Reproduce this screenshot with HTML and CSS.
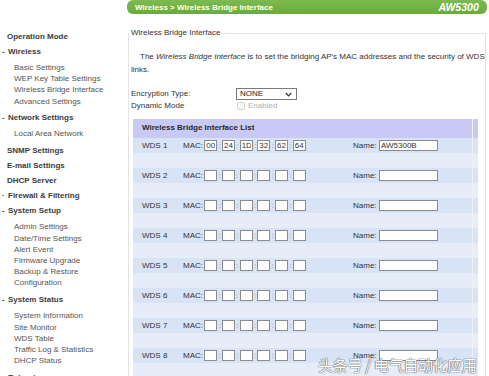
FILE: index.html
```html
<!DOCTYPE html>
<html lang="en">
<head>
    <meta charset="UTF-8">
    <title>Wireless Bridge Interface</title>
    <link rel="stylesheet" href="styles.css">
</head>
<body>
<div class="page">
    <div class="nav">
        <div class="nav-head plain">Operation Mode</div>
        <div class="nav-head"><span class="sign">-</span>Wireless</div>
        <div class="nav-group">
            <div class="nav-item">Basic Settings</div>
            <div class="nav-item">WEP Key Table Settings</div>
            <div class="nav-item">Wireless Bridge Interface</div>
            <div class="nav-item">Advanced Settings</div>
        </div>
        <div class="nav-head"><span class="sign">-</span>Network Settings</div>
        <div class="nav-group">
            <div class="nav-item">Local Area Network</div>
        </div>
        <div class="nav-head plain">SNMP Settings</div>
        <div class="nav-head plain">E-mail Settings</div>
        <div class="nav-head plain">DHCP Server</div>
        <div class="nav-head"><span class="sign">&middot;</span>Firewall &amp; Filtering</div>
        <div class="nav-head"><span class="sign">-</span>System Setup</div>
        <div class="nav-group">
            <div class="nav-item">Admin Settings</div>
            <div class="nav-item">Date/Time Settings</div>
            <div class="nav-item">Alert Event</div>
            <div class="nav-item">Firmware Upgrade</div>
            <div class="nav-item">Backup &amp; Restore</div>
            <div class="nav-item">Configuration</div>
        </div>
        <div class="nav-head"><span class="sign">-</span>System Status</div>
        <div class="nav-group">
            <div class="nav-item">System Information</div>
            <div class="nav-item">Site Monitor</div>
            <div class="nav-item">WDS Table</div>
            <div class="nav-item">Traffic Log &amp; Statistics</div>
            <div class="nav-item">DHCP Status</div>
        </div>
        <div class="nav-head"><span class="sign">-</span>Reboot</div>
    </div>

    <div class="main">
        <div class="crumb">
            <span class="crumb-title">Wireless &gt; Wireless Bridge Interface</span>
            <span class="model">AW5300</span>
        </div>

        <fieldset class="panel">
            <legend>Wireless Bridge Interface</legend>
            <p class="intro"><span class="indent">The <i>Wireless Bridge Interface</i> is to set the bridging AP's MAC addresses and the security of WDS</span><br>links.</p>

            <div class="opts">
                <span>Encryption Type:</span>
                <span class="select-wrap">
                    <select class="enc"><option>NONE</option></select>
                    <svg class="chev" width="7" height="5" viewBox="0 0 7 5"><polyline points="0.8,1 3.5,3.8 6.2,1" fill="none" stroke="#333" stroke-width="1.2"/></svg>
                </span>
                <span>Dynamic Mode</span>
                <label class="check"><input type="checkbox" disabled> Enabled</label>
            </div>

            <table class="wds-table">
                <colgroup>
                    <col class="c1"><col class="c2"><col class="c3"><col class="c4">
                </colgroup>
                <tr class="head-row"><th colspan="3">Wireless Bridge Interface List</th><th class="edge"></th></tr>
                <tbody id="wds_rows"></tbody>
            </table>
        </fieldset>
    </div>
</div>

<div class="watermark">头条号 / 电气自动化应用</div>

<script>
    // build the 8 WDS rows, only WDS 1 has values
    const rows = document.getElementById("wds_rows");
    const first = ["00", "24", "1D", "32", "62", "64"];

    for (let i = 1; i <= 8; i++) {
        let boxes = "";
        for (let j = 0; j < 6; j++) {
            const val = i === 1 ? first[j] : "";
            boxes += `<input class="mac-box" type="text" value="${val}">`;
            if (j < 5) boxes += `<span class="sep">:</span>`;
        }
        const name = i === 1 ? "AW5300B" : "";

        const main = document.createElement("tr");
        main.className = "row-main";
        main.innerHTML = `
            <td class="wds">WDS ${i}</td>
            <td><div class="mac"><span class="lbl">MAC:</span>${boxes}</div></td>
            <td><div class="name"><span>Name:</span><input class="name-box" type="text" value="${name}"></div></td>
            <td class="edge"></td>
        `;
        const gap = document.createElement("tr");
        gap.className = "row-gap";
        gap.innerHTML = `<td></td><td></td><td></td><td class="edge"></td>`;

        rows.appendChild(main);
        rows.appendChild(gap);
    }
</script>
</body>
</html>
```

FILE: styles.css
```css
body {
    margin: 0;
    font-family: "Liberation Sans", Arial, sans-serif;
    font-size: 8px;
    color: #333;
    background: #fff;
    overflow: hidden;
}

.page {
    display: flex;
    height: 376px;
}

/* left menu */
.nav {
    width: 127px;
    flex-shrink: 0;
    padding-top: 28.5px;
    box-sizing: border-box;
}

.nav-head {
    font-weight: bold;
    line-height: 15px;
    padding-left: 2px;
    color: #3c3c3c;
    white-space: nowrap;
}

.nav-head.plain {
    padding-left: 7px;
}

.nav-head .sign {
    display: inline-block;
    width: 6px;
}

.nav-group {
    padding: 3.4px 0;
}

.nav-item {
    line-height: 11.2px;
    padding-left: 14px;
    color: #555;
    white-space: nowrap;
}

/* right content */
.main {
    flex: 1;
    padding-right: 4px;
}

.crumb {
    height: 14px;
    background: linear-gradient(#7dbb50, #6aaa3c);
    border-radius: 6px;
    display: flex;
    align-items: center;
    justify-content: space-between;
    padding: 0 8px 0 8px;
    color: #fff;
}

.crumb-title {
    font-weight: bold;
}

.model {
    font-weight: bold;
    font-style: italic;
    font-size: 10.5px;
}

.panel {
    margin: 14px 1px 0 1px;
    padding: 0;
    border: 1px solid #e4e4e4;
    min-width: 0;
}

.panel legend {
    padding: 0 2px;
    line-height: 10px;
}

.intro {
    margin: 12px 0 0 2px;
    line-height: 13px;
    white-space: nowrap;
}

.intro .indent {
    padding-left: 9px;
}

.opts {
    display: grid;
    grid-template-columns: 105px auto;
    grid-auto-rows: 12px;
    align-items: center;
    margin: 11.5px 0 0 2px;
}

.select-wrap {
    position: relative;
    width: 61px;
    height: 12px;
}

.enc {
    appearance: none;
    -webkit-appearance: none;
    width: 61px;
    height: 12px;
    border: 1px solid #7a7a7a;
    border-radius: 0;
    background: #fff;
    font: inherit;
    color: #222;
    padding: 0 3px;
    margin: 0;
    display: block;
}

.chev {
    position: absolute;
    right: 5px;
    top: 4px;
}

.check {
    display: flex;
    align-items: center;
    gap: 3px;
    color: #b0b0b0;
    margin-left: 1px;
}

.check input {
    width: 8px;
    height: 8px;
    margin: 0;
}

/* WDS list */
.wds-table {
    margin: 7px 0 8px 4px;
    width: 345px;
    border-collapse: collapse;
    table-layout: fixed;
}

.c1 { width: 50px; }
.c2 { width: 170px; }
.c3 { width: 119px; }
.c4 { width: 6px; }

.wds-table td, .wds-table th {
    padding: 0;
}

.head-row th {
    height: 19px;
    background: #c9c9f6;
    text-align: left;
    padding: 4px 0 0 9px;
    box-sizing: border-box;
    vertical-align: top;
    color: #2a2a2a;
    line-height: 10px;
}

.row-main td {
    height: 15px;
    background: #d9e3f6;
}

.row-gap td {
    height: 15px;
    background: #e6edf9;
}

.wds-table .edge {
    border-left: 1px solid #eef2fb;
}

.wds {
    padding-left: 9px !important;
    color: #333;
}

.mac, .name {
    display: flex;
    align-items: center;
}

.mac .lbl {
    margin-right: 1.3px;
}

.name span {
    margin-right: 2.4px;
}

.mac-box, .name-box {
    height: 11px;
    box-sizing: border-box;
    border: 1px solid #8c8c8c;
    background: #fff;
    font: inherit;
    color: #333;
    padding: 0 1px;
    margin: 0;
    border-radius: 0;
    outline: none;
}

.mac-box {
    width: 13px;
}

.sep {
    width: 4.7px;
    text-align: center;
    color: #888;
    font-size: 7px;
}

.name-box {
    width: 59px;
}

.watermark {
    position: absolute;
    left: 318px;
    top: 357px;
    font-family: "Noto Sans CJK SC", sans-serif;
    font-size: 15px;
    line-height: 16px;
    letter-spacing: -0.3px;
    color: #fff;
    text-shadow: 0 0 1px #666, 0 0 1px #666, 0 0 1px #666;
    white-space: nowrap;
}
```
